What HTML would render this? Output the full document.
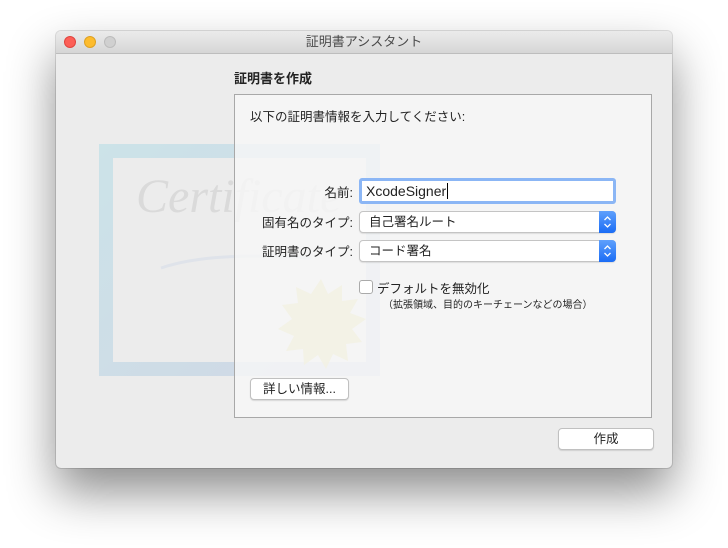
<!DOCTYPE html>
<html><head><meta charset="utf-8"><style>
body{margin:0;width:728px;height:548px;background:#fff;position:relative;overflow:hidden;font-family:"Liberation Sans","Noto Sans CJK JP",sans-serif;font-size:12px;color:#222}
.win{position:absolute;left:56px;top:31px;width:616px;height:437px;background:#ececec;border-radius:5px;box-shadow:0 0 0 1px rgba(0,0,0,.12),0 24px 48px rgba(0,0,0,.45);overflow:hidden}
.tb{position:absolute;left:0;top:0;width:616px;height:22px;background:linear-gradient(#ebebeb,#d6d6d6);border-bottom:1px solid #bdbdbd;text-align:center;line-height:22px;font-size:13px;color:#4a4a4a}
.dot{position:absolute;top:5px;width:12px;height:12px;border-radius:50%}
.abs{position:absolute}
.cert{left:43px;top:113px;width:281px;height:232px;background:linear-gradient(135deg,#c8e2e8,#cdd4e4);opacity:.9}
.certin{left:57px;top:127px;width:253px;height:204px;background:#ececec}
.box{left:178px;top:63px;width:416px;height:322px;border:1px solid #a8a8a8;background:rgba(246,246,246,.82)}
.lbl{position:absolute;text-align:right;width:160px;font-size:12.5px}
.pop{position:absolute;left:303px;width:255px;height:20px;background:#fff;border:1px solid #c4c4c4;border-radius:4px;box-shadow:0 1px 1px rgba(0,0,0,.1);font-size:12.5px;line-height:20px;text-indent:9px}
.step{position:absolute;right:-1px;top:-1px;width:17px;height:22px;background:linear-gradient(#5fa0fc,#1a6cf5);border-radius:0 4px 4px 0;text-indent:0;line-height:0}
.step svg{display:block}
.btn{position:absolute;height:20px;background:#fff;border:1px solid #c0c0c0;border-radius:4px;box-shadow:0 1px 1px rgba(0,0,0,.12);text-align:center;line-height:20px;font-size:12.5px}
</style></head><body>
<div class="win">
<div class="tb">証明書アシスタント
<div class="dot" style="left:8px;background:#fc5f57;border:.5px solid #e0443e;box-sizing:border-box"></div>
<div class="dot" style="left:28px;background:#fdbc2e;border:.5px solid #dea123;box-sizing:border-box"></div>
<div class="dot" style="left:48px;background:#d0d0d0;border:.5px solid #bcbcbc;box-sizing:border-box"></div>
</div>
<div class="abs cert"></div>
<div class="abs certin"></div>
<div class="abs" style="left:80px;top:138px;font-family:'Liberation Serif',serif;font-style:italic;font-size:48px;color:#dadada">Certificate</div>
<svg class="abs" style="left:100px;top:215px" width="160" height="30"><path d="M5 22 C40 10 90 8 155 12" stroke="#dfe3ea" stroke-width="3" fill="none"/></svg>
<div class="abs" style="left:178px;top:37px;font-weight:bold;font-size:13px">証明書を作成</div>
<div class="abs box"></div>
<svg class="abs" style="left:220px;top:248px" width="90" height="90" viewBox="0 0 90 90"><polygon fill="#f2f1e2" opacity=".8" points="45,0 52,15 66,6 66,22 82,20 74,34 90,40 76,50 86,63 70,65 72,82 57,75 50,90 42,76 28,86 27,70 10,72 18,57 2,50 16,40 6,26 22,24 20,8 35,15"/></svg>
<div class="abs" style="left:194px;top:75px;font-size:12.5px">以下の証明書情報を入力してください:</div>
<div class="lbl" style="left:137px;top:151px">名前:</div>
<div class="abs" style="left:303px;top:147px;width:251px;height:20px;border:3px solid #8bb6f5;border-radius:3px;background:#fff;font-size:14px;line-height:20px;text-indent:4px">XcodeSigner<span style="border-left:1px solid #000;margin-left:1px"></span></div>
<div class="lbl" style="left:137px;top:181px">固有名のタイプ:</div>
<div class="pop" style="top:180px">自己署名ルート<div class="step"><svg width="17" height="22"><path d="M5.5 9 L8.5 6 L11.5 9 M5.5 13 L8.5 16 L11.5 13" stroke="#fff" stroke-width="1.3" fill="none"/></svg></div></div>
<div class="lbl" style="left:137px;top:210px">証明書のタイプ:</div>
<div class="pop" style="top:209px">コード署名<div class="step"><svg width="17" height="22"><path d="M5.5 9 L8.5 6 L11.5 9 M5.5 13 L8.5 16 L11.5 13" stroke="#fff" stroke-width="1.3" fill="none"/></svg></div></div>
<div class="abs" style="left:303px;top:249px;width:12px;height:12px;border:1px solid #aaa;border-radius:3px;background:#fff"></div>
<div class="abs" style="left:321px;top:247px;font-size:12.5px">デフォルトを無効化</div>
<div class="abs" style="left:327px;top:265px;font-size:10px">（拡張領域、目的のキーチェーンなどの場合）</div>
<div class="btn" style="left:194px;top:347px;width:97px">詳しい情報...</div>
<div class="btn" style="left:502px;top:397px;width:94px">作成</div>
</div>
</body></html>
